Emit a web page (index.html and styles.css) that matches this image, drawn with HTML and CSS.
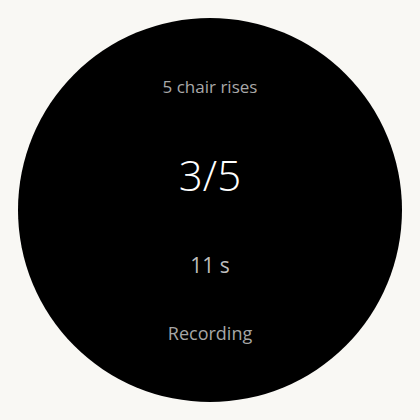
FILE: index.html
```html
<!DOCTYPE html>
<html lang="en">
<head>
<meta charset="utf-8">
<title>Chair rises</title>
<link rel="stylesheet" href="styles.css">
</head>
<body>
<main class="page">
  <section class="watch">
    <div class="title">5 chair rises</div>
    <div class="count">3/5</div>
    <div class="timer">11 s</div>
    <div class="status">Recording</div>
  </section>
</main>
</body>
</html>
```

FILE: styles.css
```css
html, body {
  margin: 0;
  padding: 0;
  background: #f9f8f4;
}
.page {
  width: 420px;
  height: 420px;
  box-sizing: border-box;
  padding: 18px;
  font-family: "Open Sans", "Noto Sans", sans-serif;
}
.watch {
  width: 384px;
  height: 384px;
  border-radius: 50%;
  background: #000;
  display: flex;
  flex-direction: column;
  align-items: center;
  box-sizing: border-box;
  padding-top: 59px;
}
.title {
  font-size: 17px;
  line-height: 20px;
  color: #a9a9a9;
}
.count {
  margin-top: 52px;
  font-size: 42px;
  line-height: 52px;
  font-weight: 300;
  color: #fff;
}
.timer {
  margin-top: 50px;
  font-size: 21px;
  line-height: 28px;
  color: #bdbdbd;
}
.status {
  margin-top: 42px;
  font-size: 18px;
  line-height: 24px;
  color: #a6a6a6;
}
```
